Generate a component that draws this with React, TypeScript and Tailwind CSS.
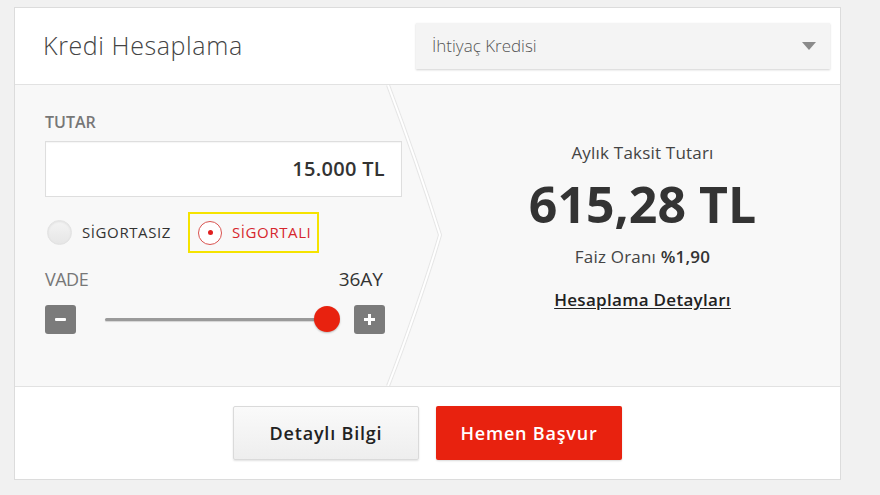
import React, { useState } from 'react'

const font = { fontFamily: '"Open Sans", "DejaVu Sans", sans-serif' }

function Radio({ checked, label, onClick }: { checked: boolean; label: string; onClick: () => void }) {
    return (
        <button onClick={onClick} className="flex items-center gap-[10px]">
            {checked ? (
                <span className="flex h-[24px] w-[24px] items-center justify-center rounded-full border-[1.5px] border-[#d9534f] bg-white">
                    <span className="h-[5px] w-[5px] rounded-full bg-[#e01f1f]" />
                </span>
            ) : (
                <span className="h-[25px] w-[25px] rounded-full border border-[#e2e2e2] bg-gradient-to-b from-[#f4f4f4] to-[#e6e6e6] shadow-[inset_0_1px_2px_rgba(0,0,0,0.08)]" />
            )}
            <span className={`text-[15px] tracking-[0.6px] ${checked ? 'text-[#d6262d]' : 'text-[#333]'}`}>{label}</span>
        </button>
    )
}

export default function App() {
    const [insured, setInsured] = useState(true)

    return (
        <div style={font} className="h-[495px] w-[880px] bg-[#f1f1f1] pl-[14px] pt-[7px]">
            <div className="flex h-[473px] w-[827px] flex-col border border-[#dcdcdc] bg-white">
                {/* Header */}
                <div className="flex h-[77px] items-center border-b border-[#e2e2e2] pl-[28px] pr-[10px]">
                    <h1 className="text-[25px] font-light tracking-[0.6px] text-[#444]">Kredi Hesaplama</h1>
                    <div className="ml-auto flex h-[46px] w-[414px] items-center justify-between bg-[#f4f4f4] pl-[16px] pr-[14px] shadow-[0_1px_2px_rgba(0,0,0,0.18)]">
                        <span className="text-[17px] font-light text-[#555]">İhtiyaç Kredisi</span>
                        <svg width="14" height="8" viewBox="0 0 14 8"><path d="M0 0h14L7 8z" fill="#8a8a8a" /></svg>
                    </div>
                </div>

                {/* Body */}
                <div className="relative flex h-[301px] bg-[#f8f8f8]">
                    <svg className="pointer-events-none absolute left-[370px] top-0" width="62" height="301" viewBox="0 0 62 301">
                        <path d="M3 0 C20 45 44 115 55 150 C44 188 20 258 3 301" fill="none" stroke="#e6e6e6" strokeWidth="4" />
                        <path d="M3 0 C20 45 44 115 55 150 C44 188 20 258 3 301" fill="none" stroke="#ffffff" strokeWidth="2" />
                    </svg>

                    <div className="w-[430px] pl-[30px] pr-[43px] pt-[25px]">
                        <div className="text-[16px] font-semibold text-[#777]">TUTAR</div>
                        <div className="mt-[7px] flex h-[56px] items-center justify-end border border-[#dedede] bg-white pr-[16px] shadow-[inset_0_1px_1px_rgba(0,0,0,0.04)]">
                            <span className="text-[20px] font-semibold tracking-[0.3px] text-[#333]">15.000 TL</span>
                        </div>

                        <div className="mt-[15px] flex items-center gap-[17px]">
                            <div className="pl-[2px]">
                                <Radio checked={!insured} label="SİGORTASIZ" onClick={() => setInsured(false)} />
                            </div>
                            <div className="flex h-[41px] items-center border-2 border-[#f5e300] pl-[8px] pr-[6px]">
                                <Radio checked={insured} label="SİGORTALI" onClick={() => setInsured(true)} />
                            </div>
                        </div>

                        <div className="mr-[17px] mt-[12px] flex items-center justify-between pr-[2px]">
                            <span className="text-[18px] tracking-[-0.5px] text-[#777]">VADE</span>
                            <span className="text-[19px] font-medium text-[#333]">36AY</span>
                        </div>

                        <div className="mr-[17px] mt-[11px] flex items-center">
                            <button className="flex h-[29px] w-[31px] items-center justify-center rounded-[3px] bg-[#7b7b7b]">
                                <span className="h-[3px] w-[11px] rounded-[1px] bg-white" />
                            </button>
                            <div className="relative ml-[29px] h-[3px] w-[224px] rounded-full bg-[#9a9a9a] shadow-[0_1px_1px_rgba(0,0,0,0.15)]">
                                <span className="absolute right-[-11px] top-[-12px] h-[26px] w-[26px] rounded-full bg-[#e8220f] shadow-[0_1px_2px_rgba(0,0,0,0.25)]" />
                            </div>
                            <button className="ml-auto flex h-[29px] w-[31px] items-center justify-center rounded-[3px] bg-[#7b7b7b]">
                                <svg width="11" height="11" viewBox="0 0 11 11"><path d="M4 0h3v4h4v3H7v4H4V7H0V4h4z" fill="#fff" /></svg>
                            </button>
                        </div>
                    </div>

                    <div className="flex flex-1 flex-col items-center pt-[55px] text-[#333]">
                        <div className="text-[17px] tracking-[0.2px] text-[#444]">Aylık Taksit Tutarı</div>
                        <div className="mt-[5px] text-[50px] font-bold leading-[66px] text-[#333]">615,28 TL</div>
                        <div className="mt-[7px] text-[17px] tracking-[0.2px] text-[#444]">
                            Faiz Oranı <span className="font-semibold text-[#333]">%1,90</span>
                        </div>
                        <a href="#" className="mt-[18px] text-[17px] font-semibold tracking-[0.3px] text-[#222] underline underline-offset-2">
                            Hesaplama Detayları
                        </a>
                    </div>
                </div>

                {/* Footer */}
                <div className="flex flex-1 justify-center gap-[17px] border-t border-[#e2e2e2] pt-[19px]">
                    <button className="h-[54px] w-[186px] rounded-[2px] border border-[#dadada] bg-gradient-to-b from-[#fafafa] to-[#eeeeee] text-[18px] font-semibold tracking-[0.8px] text-[#222] shadow-[0_1px_2px_rgba(0,0,0,0.12)]">
                        Detaylı Bilgi
                    </button>
                    <button className="h-[54px] w-[186px] rounded-[2px] bg-[#e8220f] text-[18px] font-semibold tracking-[0.8px] text-white shadow-[0_1px_2px_rgba(0,0,0,0.15)]">
                        Hemen Başvur
                    </button>
                </div>
            </div>
        </div>
    )
}
